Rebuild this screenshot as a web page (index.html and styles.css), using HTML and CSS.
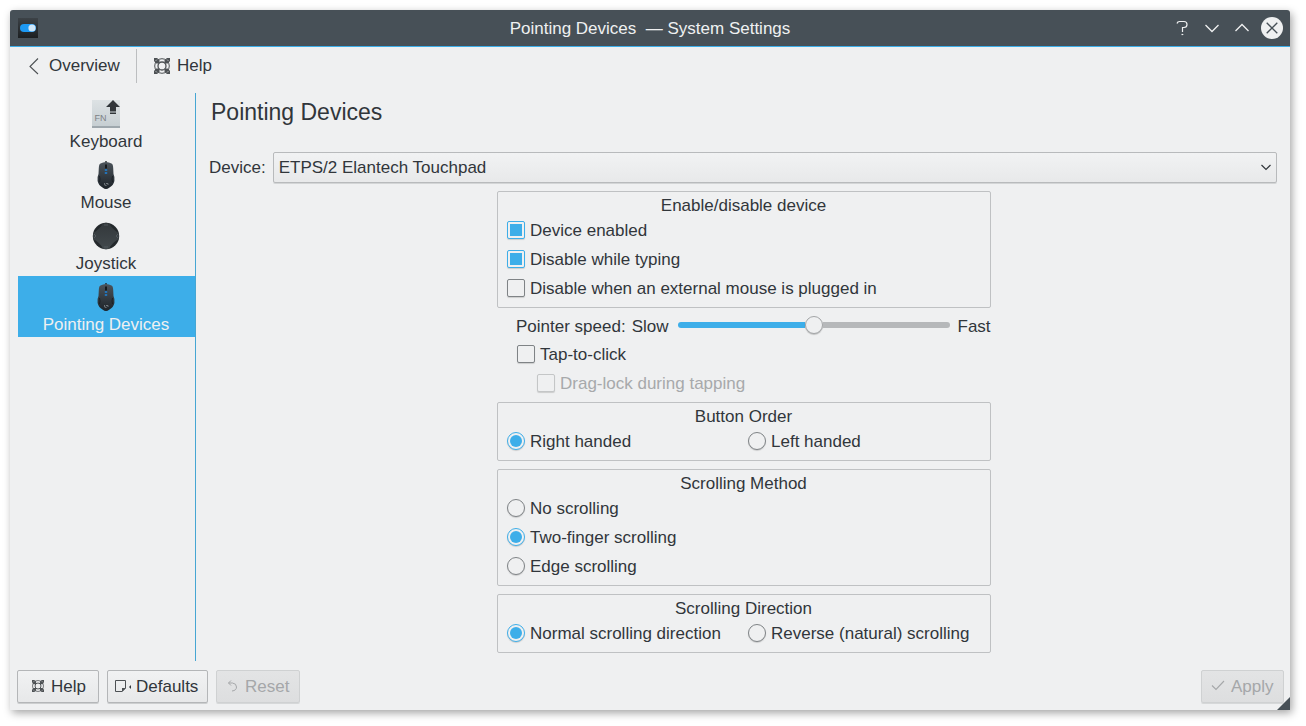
FILE: index.html
```html
<!DOCTYPE html>
<html lang="en">
<head>
<meta charset="utf-8">
<title>Pointing Devices — System Settings</title>
<link rel="stylesheet" href="styles.css">
</head>
<body>
<svg class="defs" width="0" height="0">
  <defs>
    <linearGradient id="mouseBody" x1="0" y1="0" x2="0" y2="1"><stop offset="0" stop-color="#4c545b"/><stop offset="1" stop-color="#1d2329"/></linearGradient>
    <linearGradient id="keyBody" x1="0" y1="0" x2="0" y2="1"><stop offset="0" stop-color="#dde2e4"/><stop offset="1" stop-color="#c5cdd1"/></linearGradient>
    <linearGradient id="padBody" x1="0" y1="0" x2="0" y2="1"><stop offset="0" stop-color="#33383b"/><stop offset="1" stop-color="#42494d"/></linearGradient>
    <symbol id="lifebuoy" viewBox="0 0 16 16">
      <circle cx="8" cy="8" r="7.300" fill="none" stroke="#4d5154" stroke-width="1"/>
      <circle cx="8" cy="8" r="4" fill="none" stroke="#4d5154" stroke-width="1.300"/>
      <path d="M0 0H3L5.500 2V5.500H2L0 3ZM16 0H13L10.500 2V5.500H14L16 3ZM0 16H3L5.500 14V10.500H2L0 13ZM16 16H13L10.500 14V10.500H14L16 13Z" fill="#4d5154"/>
      <path d="M1.500 3L3 1.500M14.500 3L13 1.500M1.500 13L3 14.500M14.500 13L13 14.500" stroke="#c4c6c8" stroke-width=".8"/>
    </symbol>
    <symbol id="mouse" viewBox="0 0 20 30">
      <path d="M10 1V5" stroke="#202326" stroke-width="1.400"/>
      <path d="M4.500 3.600Q7 2 10 2T15.500 3.600Q17 4 17.200 8L17.500 14Q19 17 18.400 21Q17.300 25.500 13.500 27.500Q11.500 29 10 29T6.500 27.500Q2.700 25.500 1.600 21Q1 17 2.500 14L2.800 8Q3 4 4.500 3.600Z" fill="url(#mouseBody)"/>
      <path d="M3.500 16Q4.500 19 3.500 22M16.500 16Q15.500 19 16.500 22" fill="none" stroke="#171b1f" stroke-width=".8"/>
      <rect x="9" y="4.500" width="2" height="4" fill="#15191c"/>
      <path d="M8.800 10H11.200M8.800 13H11.200" stroke="#1d83dc" stroke-width="1.500"/>
      <path d="M8.500 23Q8 26 10.500 25.500M10 23.500H12V25" fill="none" stroke="#858c91" stroke-width=".8"/>
    </symbol>
  </defs>
</svg>

<div class="window">
  <header class="titlebar">
    <svg class="app-icon" width="20" height="20" viewBox="0 0 20 20">
      <defs><linearGradient id="appBg" x1="0" y1="0" x2="0" y2="1"><stop offset="0" stop-color="#3c4247"/><stop offset="1" stop-color="#1c1f21"/></linearGradient></defs>
      <rect width="20" height="20" fill="url(#appBg)"/>
      <rect x="2" y="6" width="16" height="8" rx="4" fill="#1d99f3"/>
      <circle cx="14" cy="10" r="3.600" fill="#cfe6f8"/>
    </svg>
    <div class="title">Pointing Devices &nbsp;— System Settings</div>
    <div class="window-buttons">
      <svg width="22" height="22" viewBox="0 0 22 22" fill="none" stroke="#eff0f1" stroke-width="1.200"><path d="M6 6.500Q6.500 4.500 8.500 4.500H13Q16 4.500 16 7.500Q16 10.500 13 10.500H11.500V15"/><path d="M10.500 17.500H12.300"/></svg>
      <svg width="22" height="22" viewBox="0 0 22 22" fill="none" stroke="#eff0f1" stroke-width="1.300"><path d="M4.500 8L11 14.500L17.500 8"/></svg>
      <svg width="22" height="22" viewBox="0 0 22 22" fill="none" stroke="#eff0f1" stroke-width="1.300"><path d="M4.500 14L11 7.500L17.500 14"/></svg>
      <svg width="22" height="22" viewBox="0 0 22 22"><circle cx="11" cy="11" r="11" fill="#eff0f1"/><path d="M5.700 5.700L16.300 16.300M16.300 5.700L5.700 16.300" stroke="#475057" stroke-width="1.300"/></svg>
    </div>
  </header>

  <nav class="toolbar">
    <div class="tool overview">
      <svg width="12" height="18" viewBox="0 0 12 18" fill="none" stroke="#4d5154" stroke-width="1.100"><path d="M10 1.500L2 9.500L10 17"/></svg>
      <span>Overview</span>
    </div>
    <div class="tool help">
      <svg width="16" height="16"><use href="#lifebuoy"/></svg>
      <span>Help</span>
    </div>
  </nav>

  <div class="main">
    <aside class="sidebar">
      <div class="category">
        <svg width="32" height="32" viewBox="0 0 32 32">
          <rect x="2" y="2" width="28" height="28" fill="url(#keyBody)"/><rect x="2" y="28" width="28" height="2" fill="#9ea7ad"/>
          <text class="key-text" x="4.500" y="23">FN</text>
          <path d="M23 2L30 9H26V13.500H20V9H16ZM20 14.500H26V16H20Z" fill="#31363a"/>
        </svg>
        <span>Keyboard</span>
      </div>
      <div class="category">
        <svg width="32" height="32"><use href="#mouse" x="6" y="1" width="20" height="30"/></svg>
        <span>Mouse</span>
      </div>
      <div class="category">
        <svg width="32" height="32" viewBox="0 0 32 32">
          <circle cx="16" cy="16" r="13.200" fill="#24292c"/>
          <path d="M13 3.200Q16 2.500 19 3.200Q21.500 8.500 28.700 13Q29.500 16 28.700 19Q21.500 23 19 28.800Q16 29.500 13 28.800Q10.500 23 3.300 19Q2.500 16 3.300 13Q10.500 8.500 13 3.200Z" fill="url(#padBody)"/>
          <path d="M4 14L6 16L4 18M28 14L26 16L28 18M14 5H18M14 27H18" fill="none" stroke="#596166" stroke-width=".8"/>
        </svg>
        <span>Joystick</span>
      </div>
      <div class="category selected">
        <svg width="32" height="32"><use href="#mouse" x="6" y="1" width="20" height="30"/></svg>
        <span>Pointing Devices</span>
      </div>
    </aside>

    <main class="content">
      <h1>Pointing Devices</h1>
      <div class="device">
        <span>Device:</span>
        <div class="combo">
          <span>ETPS/2 Elantech Touchpad</span>
          <svg width="12" height="8" viewBox="0 0 12 8" fill="none" stroke="#31363b" stroke-width="1.200"><path d="M1.500 1L6 5.500L10.500 1"/></svg>
        </div>
      </div>

      <div class="settings">
        <section class="group">
          <h2>Enable/disable device</h2>
          <div class="option"><i class="check on"></i>Device enabled</div>
          <div class="option"><i class="check on"></i>Disable while typing</div>
          <div class="option"><i class="check"></i>Disable when an external mouse is plugged in</div>
        </section>

        <div class="loose">
          <div class="speed">
            <span>Pointer speed:</span><span class="slow">Slow</span>
            <div class="slider"><div class="fill"></div><div class="knob"></div><div class="rest"></div></div>
            <span>Fast</span>
          </div>
          <div class="option tap"><i class="check"></i>Tap-to-click</div>
          <div class="option drag"><i class="check"></i>Drag-lock during tapping</div>
        </div>

        <section class="group">
          <h2>Button Order</h2>
          <div class="pair">
            <div class="option"><i class="radio on"></i>Right handed</div>
            <div class="option"><i class="radio"></i>Left handed</div>
          </div>
        </section>

        <section class="group">
          <h2>Scrolling Method</h2>
          <div class="option"><i class="radio"></i>No scrolling</div>
          <div class="option"><i class="radio on"></i>Two-finger scrolling</div>
          <div class="option"><i class="radio"></i>Edge scrolling</div>
        </section>

        <section class="group">
          <h2>Scrolling Direction</h2>
          <div class="pair">
            <div class="option"><i class="radio on"></i>Normal scrolling direction</div>
            <div class="option"><i class="radio"></i>Reverse (natural) scrolling</div>
          </div>
        </section>
      </div>
    </main>
  </div>

  <footer class="actions">
    <div class="button b-help"><svg width="12" height="12"><use href="#lifebuoy"/></svg>Help</div>
    <div class="button b-defaults"><svg width="17" height="12" viewBox="0 0 17 12"><path d="M.5 .5H10.500V8L7 11.500H.5Z" fill="none" stroke="#4d5154"/><path d="M7 12V8H11Z" fill="#4d5154"/><path d="M16 5V9L14 7Z" fill="#31363b"/></svg>Defaults</div>
    <div class="button b-reset disabled"><svg width="12" height="12" viewBox="0 0 12 12" fill="none" stroke="#a5a7a9"><path d="M4 .5L1.500 3L4 5.500M1.500 3H5.500Q9.500 3.500 9.500 7T5 11"/></svg>Reset</div>
    <div class="button b-apply disabled"><svg width="14" height="12" viewBox="0 0 14 12" fill="none" stroke="#a5a7a9" stroke-width="1.100"><path d="M1 5.500L5 9.500L13 1"/></svg>Apply</div>
  </footer>
  <div class="grip"></div>
</div>
</body>
</html>
```
FILE: styles.css
```css
* { box-sizing: border-box; }
body {
  margin: 0;
  padding: 10px 16px 16px 10px;
  height: 726px;
  overflow: hidden;
  background: #fff;
  color: #31363b;
  font: 17px/20px "Liberation Sans", Arial, sans-serif;
  white-space: nowrap;
}
.defs { position: absolute; }
svg { display: block; flex: none; }
.window {
  position: relative;
  display: flex;
  flex-direction: column;
  width: 1280px;
  height: 700px;
  background: #eff0f1;
  border-radius: 3px 3px 0 0;
  box-shadow: 2px 3px 8px rgba(0, 0, 0, .36);
}
.titlebar {
  display: flex;
  align-items: center;
  height: 37px;
  padding: 0 7px 0 8px;
  background: #475057;
  border-bottom: 1px solid #3daee9;
  border-radius: 3px 3px 0 0;
  color: #eff0f1;
}
.title { flex: 1; padding: 2px 0 0 91px; text-align: center; }
.window-buttons { display: flex; gap: 8px; }
.toolbar { display: flex; height: 46px; padding-top: 2px; }
.tool { display: flex; align-items: center; height: 34px; }
.overview { width: 127px; padding-left: 18px; gap: 9px; border-right: 1px solid #bcbec0; }
.help { padding-left: 17px; gap: 7px; }
.main { display: flex; height: 568px; }
.sidebar { width: 186px; padding-left: 8px; border-right: 1px solid #46a6d3; }
.category { display: flex; flex-direction: column; align-items: center; height: 61px; padding: 5px 1px 0 0; }
.category span { margin-top: 2px; }
.selected { color: #eff0f1; background: #3daee9; }
.key-text { font-size: 9px; fill: #7c8286; }
.content { flex: 1; padding: 6px 13px 0 13px; }
h1 { margin: 0 0 0 2px; font-size: 23px; font-weight: 400; line-height: 26px; }
.device { display: flex; align-items: center; gap: 7px; margin-top: 27px; }
.combo {
  display: flex;
  flex: 1;
  align-items: center;
  justify-content: space-between;
  height: 31px;
  padding: 0 4px 0 5px;
  border: 1px solid #b8babc;
  border-radius: 2px;
  background: linear-gradient(#f1f2f3, #e8e9ea);
  box-shadow: 0 1px 0 #d3d5d6;
}
.settings { width: 494px; margin: 8px 0 0 288px; }
.group { padding-bottom: 6px; border: 1px solid #bfc1c3; border-radius: 2px; }
.group + .group { margin-top: 8px; }
h2 { margin: 0; padding-right: 1px; font-size: 17px; font-weight: 400; line-height: 28px; height: 25px; text-align: center; }
.option { display: flex; align-items: center; gap: 5px; height: 26px; padding: 2px 0 0 9px; }
.option + .option { margin-top: 3px; }
.check, .radio {
  display: block;
  width: 18px;
  height: 18px;
  margin-top: -2px;
  border: 1px solid #7f8386;
  border-radius: 2px;
  background: #eff0f1;
  box-shadow: 0 1px 1px rgba(0, 0, 0, .15);
}
.radio { border-radius: 50%; }
.on { padding: 2px; border-color: #3daee9; }
.on::before { content: ""; display: block; height: 12px; background: #3daee9; }
.radio.on::before { border-radius: 50%; }
.pair { display: grid; grid-template-columns: 241px 1fr; }
.pair .option + .option { margin-top: 0; }
.loose { height: 94px; padding-top: 4px; }
.speed { display: flex; align-items: center; height: 28px; padding: 2px 0 0 19px; }
.slow { margin-left: 6px; }
.slider { display: flex; align-items: center; width: 272px; margin: -4px 8px 0 9px; }
.fill, .rest { flex: 1; height: 6px; background: #3daee9; border-radius: 3px 0 0 3px; }
.rest { background: #b6b8ba; border-radius: 0 3px 3px 0; }
.knob { width: 18px; height: 18px; border: 1px solid #a3a5a7; border-radius: 50%; background: #eff0f1; box-shadow: 0 1px 1px rgba(0, 0, 0, .2); }
.tap { margin-top: 1px; padding-left: 20px; }
.drag { padding-left: 40px; color: #a7a9ab; }
.drag .check { border-color: #c4c6c7; }
.actions { display: flex; height: 49px; padding: 9px 6px 0 7px; gap: 8px; }
.button {
  display: flex;
  align-items: center;
  height: 33px;
  border: 1px solid #b4b6b8;
  border-radius: 2px;
  background: linear-gradient(#f1f2f3, #e7e8e9);
  box-shadow: 0 1px 0 #cccecf;
}
.b-help { width: 82px; padding-left: 14px; gap: 7px; }
.b-defaults { width: 101px; padding-left: 7px; gap: 4px; }
.b-reset { width: 84px; padding-left: 10px; gap: 6px; }
.b-apply { width: 83px; margin-left: auto; padding-left: 9px; gap: 6px; }
.button svg { margin-top: -1px; }
.disabled { color: #a5a7a9; background: linear-gradient(#e3e4e5, #dddedf); border-color: #cfd1d2; box-shadow: 0 1px 0 #d6d8d9; }
.grip { position: absolute; right: 0; bottom: 0; width: 13px; height: 13px; background: #475057; clip-path: polygon(100% 0, 100% 100%, 0 100%); }
```
